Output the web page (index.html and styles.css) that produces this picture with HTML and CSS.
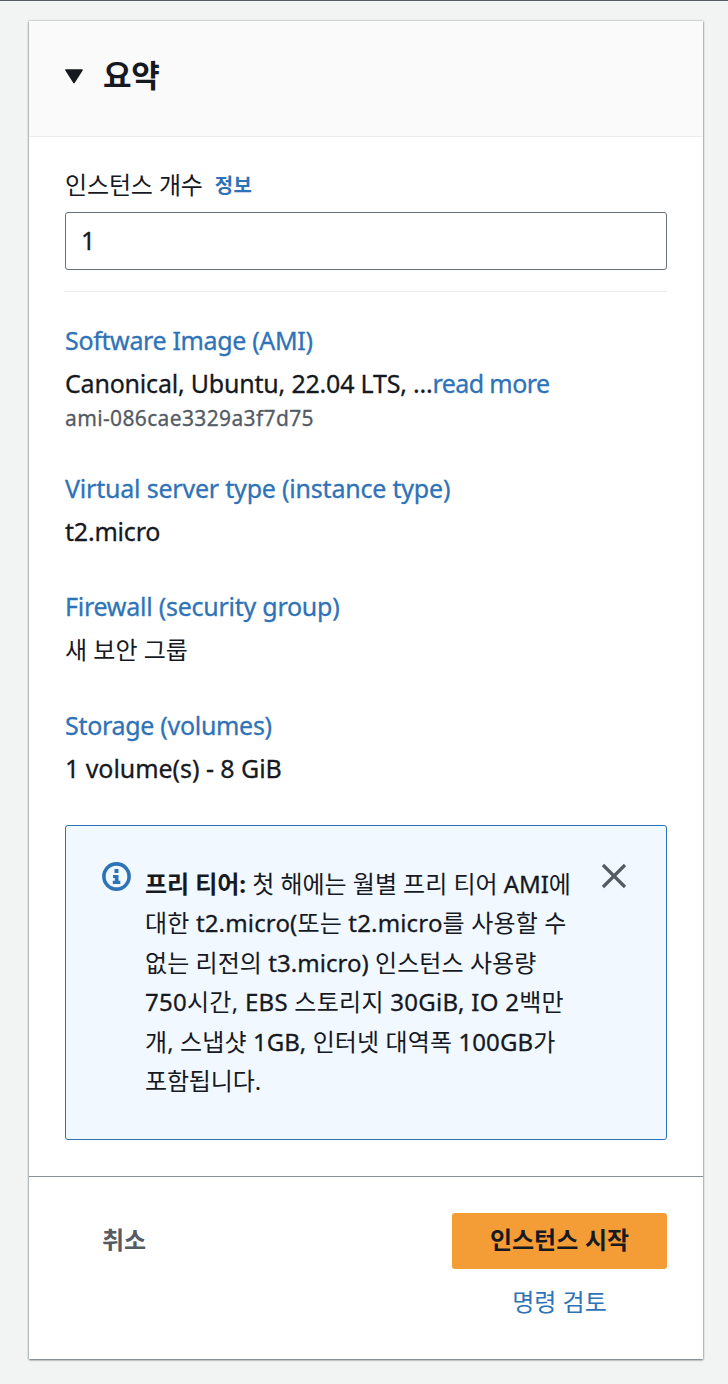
FILE: index.html
```html
<!DOCTYPE html>
<html lang="ko">
<head>
<meta charset="utf-8">
<title>요약</title>
<link rel="stylesheet" href="styles.css">
</head>
<body>
<main class="panel">
  <header class="panel-header">
    <svg class="caret" width="18" height="15" viewBox="0 0 18 15"><path d="M1 1H17L9 13.500Z" fill="#16191f" stroke="#16191f" stroke-width="1.600" stroke-linejoin="round"/></svg>
    <h1 class="title">요약</h1>
  </header>
  <section class="body">
    <div class="field-label"><label class="label" for="count">인스턴스 개수</label><a class="info-link">정보</a></div>
    <input class="input" id="count" value="1">
    <hr class="divider">
    <div class="item item-ami">
      <a class="link l-ami">Software Image (AMI)</a>
      <p class="value l-canon">Canonical, Ubuntu, 22.04 LTS, ...<a class="link-inline">read more</a></p>
      <p class="small">ami-086cae3329a3f7d75</p>
    </div>
    <div class="item">
      <a class="link l-type">Virtual server type (instance type)</a>
      <p class="value l-t2">t2.micro</p>
    </div>
    <div class="item item-firewall">
      <a class="link l-fire">Firewall (security group)</a>
      <p class="value ko">새 보안 그룹</p>
    </div>
    <div class="item item-storage">
      <a class="link l-stor">Storage (volumes)</a>
      <p class="value l-vol">1 volume(s) - 8 GiB</p>
    </div>
    <aside class="alert">
      <svg class="info-icon" width="29" height="29" viewBox="0 0 29 29"><circle cx="14.500" cy="14.500" r="12.600" fill="none" stroke="#2e73b8" stroke-width="3.600"/><path d="M12.500 7h4v4h-4zM11 13h5.500v5.800h1.800v3.200h-7.500v-3.200h2v-2.800h-1.800z" fill="#2e73b8"/></svg>
      <p class="message">
        <span class="line l1"><b>프리 티어:</b> 첫 해에는 월별 프리 티어 <span class="en">AMI</span>에</span>
        <span class="line l2">대한 <span class="en">t2.micro(</span>또는 <span class="en">t2.micro</span>를 사용할 수</span>
        <span class="line l3">없는 리전의 <span class="en">t3.micro)</span> 인스턴스 사용량</span>
        <span class="line l4"><span class="en">750</span>시간, <span class="en">EBS</span> 스토리지 <span class="en">30GiB, IO 2</span>백만</span>
        <span class="line l5">개, 스냅샷 <span class="en">1GB,</span> 인터넷 대역폭 <span class="en">100GB</span>가</span>
        <span class="line l6">포함됩니다.</span>
      </p>
      <svg class="close" width="26" height="26" viewBox="0 0 26 26"><path d="M2 2L24 24M24 2L2 24" stroke="#545b64" stroke-width="3.200"/></svg>
    </aside>
  </section>
  <footer class="footer">
    <button class="cancel">취소</button>
    <div class="actions">
      <button class="launch">인스턴스 시작</button>
      <a class="review">명령 검토</a>
    </div>
  </footer>
</main>
</body>
</html>
```
FILE: styles.css
```css
* { box-sizing: border-box; }
body {
  margin: 0;
  height: 1384px;
  padding: 20px 25px 0 29px;
  border-top: 1px solid #545b64;
  background: #f2f4f3;
  color: #16191f;
  font: 24px/36px "Noto Sans", "Noto Sans CJK KR", sans-serif;
}
.panel {
  height: 1338px;
  display: flex;
  flex-direction: column;
  background: #fff;
  box-shadow: 0 1px 2px rgba(0, 28, 36, .55), 0 0 2px rgba(0, 28, 36, .35);
}
.panel-header {
  height: 116px;
  flex: none;
  display: flex;
  align-items: center;
  gap: 20px;
  padding: 0 36px 6px;
  background: #fafafa;
  border-bottom: 1px solid #eaeded;
}
.caret { margin-top: 2px; }
.title { margin: -2px 0 0; font-size: 31px; line-height: 40px; font-weight: 700; letter-spacing: -.3px; }
.body { flex: none; height: 1039px; padding: 28px 36px 0; }
.field-label { display: flex; height: 40px; align-items: center; gap: 12px; }
.label { font-size: 24px; letter-spacing: -.13px; white-space: nowrap; }
.info-link { margin-top: 2px; color: #2e73b8; font-weight: 700; font-size: 20px; letter-spacing: .3px; }
.input {
  display: block;
  width: 100%;
  height: 58px;
  margin-top: 7px;
  padding: 0 15px 2px;
  border: 1px solid #687078;
  border-radius: 3px;
  color: #16191f;
  font: 25px "Noto Sans", sans-serif;
  -webkit-text-stroke: .3px;
  outline: 0;
}
.divider { height: 1px; margin: 21px 0 30px; border: 0; background: #eaeded; }
.item { height: 118px; }
.item-ami { height: 148px; }
.item-firewall { height: 119px; }
.item-storage { height: 118px; }
.link, .value { display: block; margin: 0; font-size: 25px; white-space: nowrap; }
.link { line-height: 36px; color: #2e73b8; -webkit-text-stroke: .3px; }
.value { margin-top: 7px; line-height: 36px; -webkit-text-stroke: .3px; }
.value.ko { margin-top: 8px; font-size: 24px; -webkit-text-stroke: 0; }
.link-inline { color: #2e73b8; letter-spacing: -.6px; }
.l-ami { letter-spacing: -.35px; }
.l-canon { letter-spacing: -.2px; }
.l-type, .l-t2 { letter-spacing: -.2px; }
.l-fire { letter-spacing: -.25px; }
.l-stor { letter-spacing: -.3px; }
.l-vol { letter-spacing: -.05px; }
.small { margin: 1px 0 0; font-size: 21px; line-height: 32px; letter-spacing: .36px; color: #545b64; -webkit-text-stroke: .3px; }
.alert {
  height: 315px;
  display: flex;
  align-items: flex-start;
  padding: 36px 36px 0;
  border: 1px solid #2e73b8;
  border-radius: 3px;
  background: #f1f8ff;
}
.info-icon { flex: none; }
.message { flex: 1; margin: 1.500px 0 0 14px; min-width: 0; }
.line { display: block; width: max-content; line-height: 39.6px; white-space: nowrap; }
.en { -webkit-text-stroke: .3px; }
.l1 { letter-spacing: -.04px; }
.l2 { letter-spacing: .16px; }
.l3 { letter-spacing: .05px; }
.l4 { letter-spacing: .27px; }
.l5 { letter-spacing: .1px; }
.l6 { letter-spacing: -.15px; }
.close { flex: none; margin: 1px 3px 0 0; }
.footer {
  flex: 1;
  display: flex;
  justify-content: space-between;
  align-items: flex-start;
  padding: 36px 36px 0 73px;
  border-top: 1px solid #879196;
}
button { border: 0; padding: 0 0 5px; font: 700 24px "Noto Sans CJK KR", sans-serif; }
.cancel { height: 56px; background: none; color: #545b64; }
.actions { display: flex; flex-direction: column; align-items: center; }
.launch { width: 215px; height: 56px; border-radius: 3px; background: #f49d37; color: #16191f; }
.review { margin-top: 15px; color: #2e73b8; }
```
